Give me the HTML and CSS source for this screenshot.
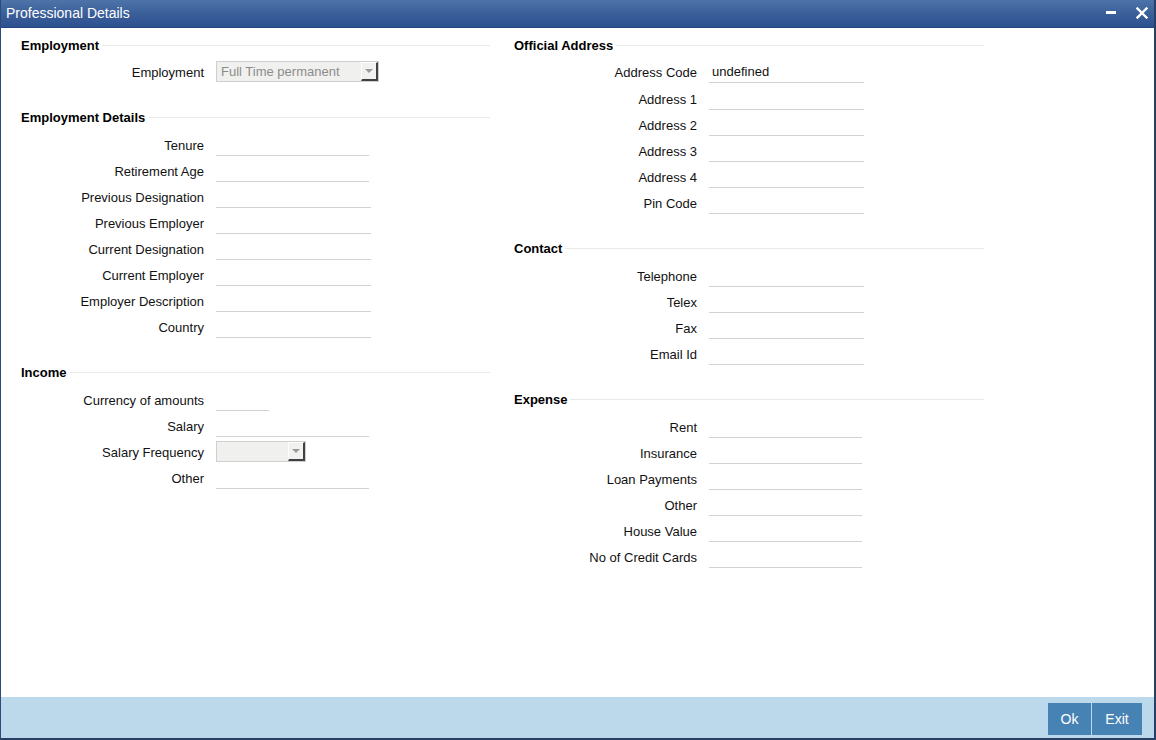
FILE: index.html
```html
<!DOCTYPE html>
<html>
<head>
<meta charset="utf-8">
<title>Professional Details</title>
<link rel="stylesheet" href="styles.css">
</head>
<body>
<div class="window">
  <div class="titlebar">
    <span class="title">Professional Details</span>
    <div class="controls">
      <svg class="ico-min" width="10" height="4" viewBox="0 0 10 4"><rect x="0" y="0" width="10" height="3" fill="#fff"/></svg>
      <svg class="ico-close" width="12" height="12" viewBox="0 0 12 12"><path d="M1.5 1.5 L10.5 10.5 M10.5 1.5 L1.5 10.5" stroke="#fff" stroke-width="2.4" stroke-linecap="square"/></svg>
    </div>
  </div>

  <div class="content">
    <div class="col">
      <section class="sec">
        <div class="sec-head"><span>Employment</span><i class="rule"></i></div>
        <div class="row"><label>Employment</label>
          <div class="select sel-emp"><span class="sel-text">Full Time permanent</span><span class="sel-btn"><i class="tri"></i></span></div>
        </div>
      </section>

      <section class="sec">
        <div class="sec-head"><span>Employment Details</span><i class="rule"></i></div>
        <div class="row"><label>Tenure</label><div class="inp"></div></div>
        <div class="row"><label>Retirement Age</label><div class="inp"></div></div>
        <div class="row"><label>Previous Designation</label><div class="inp wide"></div></div>
        <div class="row"><label>Previous Employer</label><div class="inp wide"></div></div>
        <div class="row"><label>Current Designation</label><div class="inp wide"></div></div>
        <div class="row"><label>Current Employer</label><div class="inp wide"></div></div>
        <div class="row"><label>Employer Description</label><div class="inp wide"></div></div>
        <div class="row"><label>Country</label><div class="inp wide"></div></div>
      </section>

      <section class="sec">
        <div class="sec-head"><span>Income</span><i class="rule"></i></div>
        <div class="row"><label>Currency of amounts</label><div class="inp short"></div></div>
        <div class="row"><label>Salary</label><div class="inp"></div></div>
        <div class="row"><label>Salary Frequency</label>
          <div class="select sel-freq"><span class="sel-text"></span><span class="sel-btn"><i class="tri"></i></span></div>
        </div>
        <div class="row"><label>Other</label><div class="inp"></div></div>
      </section>
    </div>

    <div class="col col-right">
      <section class="sec">
        <div class="sec-head"><span>Official Address</span><i class="rule"></i></div>
        <div class="row row-gap"><label>Address Code</label><div class="inp wide"><span class="val">undefined</span></div></div>
        <div class="row"><label>Address 1</label><div class="inp wide"></div></div>
        <div class="row"><label>Address 2</label><div class="inp wide"></div></div>
        <div class="row"><label>Address 3</label><div class="inp wide"></div></div>
        <div class="row"><label>Address 4</label><div class="inp wide"></div></div>
        <div class="row"><label>Pin Code</label><div class="inp wide"></div></div>
      </section>

      <section class="sec">
        <div class="sec-head"><span>Contact</span><i class="rule"></i></div>
        <div class="row"><label>Telephone</label><div class="inp wide"></div></div>
        <div class="row"><label>Telex</label><div class="inp wide"></div></div>
        <div class="row"><label>Fax</label><div class="inp wide"></div></div>
        <div class="row"><label>Email Id</label><div class="inp wide"></div></div>
      </section>

      <section class="sec">
        <div class="sec-head"><span>Expense</span><i class="rule"></i></div>
        <div class="row"><label>Rent</label><div class="inp"></div></div>
        <div class="row"><label>Insurance</label><div class="inp"></div></div>
        <div class="row"><label>Loan Payments</label><div class="inp"></div></div>
        <div class="row"><label>Other</label><div class="inp"></div></div>
        <div class="row"><label>House Value</label><div class="inp"></div></div>
        <div class="row"><label>No of Credit Cards</label><div class="inp"></div></div>
      </section>
    </div>
  </div>

  <div class="footer">
    <button class="btn btn-ok">Ok</button>
    <button class="btn btn-exit">Exit</button>
  </div>
</div>
</body>
</html>
```

FILE: styles.css
```css
* { box-sizing: border-box; }

html, body {
  margin: 0;
  padding: 0;
  background: #ffffff;
}

body {
  font-family: "Liberation Sans", Arial, sans-serif;
  font-size: 13px;
  color: #000;
}

.window {
  width: 1156px;
  height: 740px;
  display: flex;
  flex-direction: column;
  border-left: 1px solid #2c4a7c;
  border-right: 2px solid #283f66;
  border-bottom: 2px solid #283f66;
  background: #fff;
}

.titlebar {
  height: 28px;
  flex: 0 0 28px;
  display: flex;
  align-items: center;
  background: linear-gradient(to bottom, #4e73a9 0%, #3b5f99 50%, #2c5190 100%);
  border-bottom: 1px solid #27467d;
  padding-left: 5px;
  padding-right: 6px;
}

.title {
  color: #fff;
  font-size: 14px;
  line-height: 16px;
  margin-top: -2px;
}

.controls {
  margin-left: auto;
  display: flex;
  align-items: center;
  height: 100%;
}

.ico-min {
  display: block;
  margin-top: -1px;
}

.ico-close {
  display: block;
  margin-left: 20px;
  margin-top: -2px;
}

.content {
  flex: 1;
  display: flex;
  gap: 24px;
  padding: 3px 0 0 20px;
}

.col {
  width: 469px;
  display: flex;
  flex-direction: column;
}

.col-right {
  width: 470px;
}

.sec + .sec {
  margin-top: 18px;
}

.sec-head {
  height: 28px;
  display: flex;
  align-items: center;
  font-weight: bold;
  font-size: 13px;
}

.sec + .sec .sec-head {
  margin-bottom: 1px;
}

.rule {
  flex: 1;
  height: 1px;
  background: #e9e9e9;
  margin-left: 3px;
}

.row {
  height: 26px;
  display: flex;
  align-items: center;
}

.row-gap {
  margin-bottom: 1px;
}

.row label {
  width: 183px;
  text-align: right;
  margin-right: 12px;
  color: #111;
  white-space: nowrap;
}

.inp {
  width: 153px;
  height: 22px;
  border-bottom: 1px solid #d2d2d2;
  display: flex;
  align-items: center;
  padding-left: 3px;
}

.inp.wide { width: 155px; }
.inp.short { width: 53px; }

.val {
  color: #111;
}

.select {
  height: 21px;
  display: flex;
  align-items: center;
  background: #f0f0ee;
  border: 1px solid #cfcfcf;
  margin-top: -1px;
}

.sel-emp { width: 163px; }
.sel-freq { width: 90px; }

.sel-text {
  flex: 1;
  color: #8c8c8c;
  padding-left: 4px;
  white-space: nowrap;
  overflow: hidden;
}

.sel-btn {
  width: 17px;
  height: 19px;
  margin-right: 0;
  background: #f1f1ef;
  border-top: 1px solid #ffffff;
  border-left: 1px solid #ffffff;
  border-right: 2px solid #404040;
  border-bottom: 2px solid #404040;
  display: flex;
  align-items: center;
  justify-content: center;
}

.tri {
  width: 0;
  height: 0;
  border-left: 4px solid transparent;
  border-right: 4px solid transparent;
  border-top: 4px solid #9a9a9a;
}

.footer {
  height: 41px;
  flex: 0 0 41px;
  background: #bcd9ec;
  display: flex;
  justify-content: flex-end;
  align-items: flex-start;
  gap: 1px;
  padding: 6px 12px 0 0;
}

.btn {
  height: 32px;
  border: none;
  background: #4682b4;
  color: #fff;
  font-family: "Liberation Sans", Arial, sans-serif;
  font-size: 14px;
  padding: 0;
  margin: 0;
}

.btn-ok { width: 43px; }
.btn-exit { width: 50px; }
```
